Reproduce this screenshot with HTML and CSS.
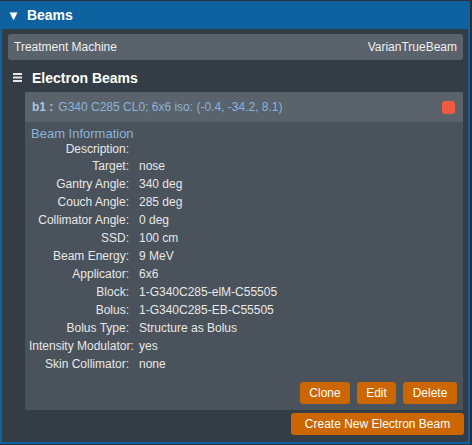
FILE: index.html
```html
<!DOCTYPE html>
<html>
<head>
<meta charset="utf-8">
<link rel="stylesheet" href="styles.css">
</head>
<body>
<div class="panel">
  <div class="panel-head"><span class="caret">&#9660;</span><span class="title">Beams</span></div>
  <div class="panel-body">
    <div class="machine"><span>Treatment Machine</span><span>VarianTrueBeam</span></div>
    <div class="section-head">
      <svg class="burger" width="9" height="9" viewBox="0 0 9 9"><rect x="0" y="0" width="9" height="2" fill="#e8e8e8"/><rect x="0" y="3.5" width="9" height="2" fill="#e8e8e8"/><rect x="0" y="7" width="9" height="2" fill="#e8e8e8"/></svg>
      <span>Electron Beams</span>
    </div>
    <div class="card">
      <div class="card-head">
        <span class="beam-id">b1 :</span>
        <span class="beam-desc">G340 C285 CL0; 6x6 iso: (-0.4, -34.2, 8.1)</span>
        <span class="status"></span>
      </div>
      <div class="card-body">
        <div class="info-title">Beam Information</div>
        <div class="info">
          <div class="k first">Description:</div><div class="v first"></div>
          <div class="k">Target:</div><div class="v">nose</div>
          <div class="k">Gantry Angle:</div><div class="v">340 deg</div>
          <div class="k">Couch Angle:</div><div class="v">285 deg</div>
          <div class="k">Collimator Angle:</div><div class="v">0 deg</div>
          <div class="k">SSD:</div><div class="v">100 cm</div>
          <div class="k">Beam Energy:</div><div class="v">9 MeV</div>
          <div class="k">Applicator:</div><div class="v">6x6</div>
          <div class="k">Block:</div><div class="v">1-G340C285-elM-C55505</div>
          <div class="k">Bolus:</div><div class="v">1-G340C285-EB-C55505</div>
          <div class="k">Bolus Type:</div><div class="v">Structure as Bolus</div>
          <div class="k">Intensity Modulator:</div><div class="v">yes</div>
          <div class="k">Skin Collimator:</div><div class="v">none</div>
        </div>
        <div class="actions">
          <button class="btn btn-clone">Clone</button>
          <button class="btn btn-edit">Edit</button>
          <button class="btn btn-delete">Delete</button>
        </div>
      </div>
    </div>
    <div class="footer">
      <button class="btn btn-create">Create New Electron Beam</button>
    </div>
  </div>
</div>
</body>
</html>
```
FILE: styles.css
```css
html, body {
  margin: 0;
  padding: 0;
}
body {
  background: #2a3038;
  width: 472px;
  height: 445px;
  font-family: "Liberation Sans", Arial, sans-serif;
  padding-top: 1px;
  box-sizing: border-box;
}
.panel {
  width: 470px;
  height: 443px;
  box-sizing: border-box;
  border: 2px solid #0f62a0;
  border-top: 0;
  background: #343c45;
  display: flex;
  flex-direction: column;
}
.panel-head {
  height: 28px;
  background: #0f62a0;
  display: flex;
  align-items: center;
  color: #ffffff;
  font-weight: bold;
  font-size: 14px;
  padding-left: 5px;
}
.caret {
  font-size: 13px;
  margin-right: 7px;
}
.panel-body {
  padding: 5px 5px 0 6px;
  display: flex;
  flex-direction: column;
}
.machine {
  height: 26px;
  background: #5a626b;
  border-radius: 3px;
  display: flex;
  align-items: center;
  justify-content: space-between;
  padding: 0 6px;
  color: #f0f0f0;
  font-size: 12px;
}
.section-head {
  height: 29px;
  padding-top: 3px;
  display: flex;
  align-items: center;
  color: #ffffff;
  font-weight: bold;
  font-size: 14px;
  padding-left: 5px;
  gap: 10px;
}
.burger {
  display: block;
}
.card {
  margin-left: 17px;
  display: flex;
  flex-direction: column;
}
.card-head {
  height: 30px;
  background: #5a626b;
  display: flex;
  align-items: center;
  padding: 0 8px 0 7px;
  font-size: 12px;
}
.beam-id {
  color: #a6c6e4;
  font-weight: bold;
  margin-right: 5px;
}
.beam-desc {
  color: #8ab4dc;
  flex: 1;
}
.status {
  width: 13px;
  height: 13px;
  border-radius: 3px;
  background: #f05a40;
}
.card-body {
  background: #4a525b;
  height: 288px;
  box-sizing: border-box;
  padding: 4px 6px 6px 4px;
  display: flex;
  flex-direction: column;
}
.info-title {
  color: #8ab4dc;
  font-size: 13px;
  line-height: 15px;
  padding-left: 2px;
}
.info {
  display: grid;
  grid-template-columns: 100px 1fr;
  grid-template-rows: 16px;
  column-gap: 10px;
  grid-auto-rows: 18px;
  align-items: center;
  font-size: 12px;
  color: #e8e8e8;
}
.k {
  text-align: right;
  white-space: nowrap;
}
.v {
  white-space: nowrap;
}
.actions {
  margin-top: auto;
  display: flex;
  justify-content: flex-end;
  gap: 7px;
}
.btn {
  background: #cc6600;
  color: #ffffff;
  border: 0;
  border-radius: 3px;
  font-family: "Liberation Sans", Arial, sans-serif;
  font-size: 12px;
  height: 22px;
  padding: 0 6px;
  margin: 0;
}
.btn-clone { width: 50px; }
.btn-edit { width: 39px; }
.btn-delete { width: 54px; }
.footer {
  display: flex;
  justify-content: flex-end;
  padding-top: 3px;
  margin-right: -1px;
}
.btn-create {
  width: 173px;
  height: 22px;
}
```
